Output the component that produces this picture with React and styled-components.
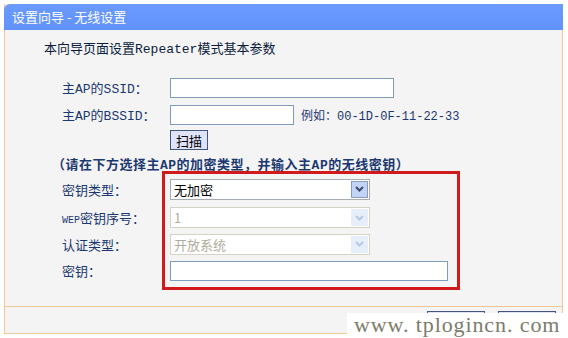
import styled, { createGlobalStyle } from "styled-components";

const GlobalStyle = createGlobalStyle`
  body {
    margin: 0;
    background: #ffffff;
    font-family: "Liberation Mono", "Noto Sans CJK SC", monospace;
    font-size: 13px;
  }
`;

const Panel = styled.div`
  position: relative;
  margin: 4px 0 0 4px;
  width: 557px;
  border: 1px solid #f0c896;
  border-top: none;
  background: #f4f4f4;
`;

const TitleBar = styled.div`
  height: 26px;
  margin: 0 -1px;
  padding-left: 8px;
  background: linear-gradient(#6b9bff, #6192fb);
  border-top-left-radius: 6px;
  color: #ffffff;
  font-family: "Noto Sans CJK SC", sans-serif;
  font-size: 13px;
  line-height: 25px;
`;

const Body = styled.div`
  position: relative;
  padding: 12px 0 22px 57px;
`;

const Intro = styled.div`
  margin-left: -18px;
  height: 16px;
  line-height: 16px;
  color: #0c1c3c;
  margin-bottom: 16px;
`;

const Row = styled.div`
  display: flex;
  align-items: center;
  height: ${(p) => p.$h || 27}px;
`;

const Label = styled.div`
  width: 108px;
  flex: none;
  color: #1b3870;
  white-space: nowrap;
`;

const Small = styled.span`
  font-size: 10px;
`;

const Input = styled.div`
  box-sizing: border-box;
  width: ${(p) => p.$w}px;
  height: ${(p) => p.$h || 20}px;
  background: #ffffff;
  border: 1px solid #7f9db9;
`;

const Example = styled.span`
  margin-left: 7px;
  color: #1b3870;
  font-size: 12px;
`;

const Button = styled.div`
  box-sizing: border-box;
  height: 20px;
  padding: 0 4px;
  display: flex;
  align-items: center;
  justify-content: center;
  width: ${(p) => p.$w || 38}px;
  background: #dfe4fb;
  border: 1px solid #44557f;
  color: #000;
  font-family: "Noto Sans CJK SC", sans-serif;
  font-size: 13px;
`;

const Hint = styled.div`
  margin-left: -10px;
  color: #1b3870;
  font-weight: 600;
  letter-spacing: 0.5px;
  white-space: nowrap;
`;

const SelectBox = styled.div`
  box-sizing: border-box;
  width: 200px;
  height: 21px;
  display: flex;
  align-items: center;
  background: #ffffff;
  border: 1px solid ${(p) => (p.$disabled ? "#d5d2c4" : "#a5acb5")};
  color: ${(p) => (p.$disabled ? "#b0ad9e" : "#000")};
  padding-left: 3px;
`;

const SelectText = styled.span`
  flex: 1;
  font-family: "Noto Sans CJK SC", sans-serif;
  font-size: 13px;
`;

const Arrow = styled.div`
  width: 17px;
  height: 17px;
  margin-right: 1px;
  display: flex;
  align-items: center;
  justify-content: center;
  background: ${(p) => (p.$disabled ? "#e6eefa" : "#c2d3f7")};
  border: ${(p) => (p.$disabled ? "none" : "1px solid #8a9bbd")};
  box-sizing: border-box;
`;

const RedFrame = styled.div`
  position: absolute;
  left: 157px;
  top: 141px;
  width: 298px;
  height: 119px;
  box-sizing: border-box;
  border: 3px solid #d01a1c;
  pointer-events: none;
`;

const Footer = styled.div`
  height: 27px;
  border-top: 1px solid #f0c896;
  display: flex;
  justify-content: flex-end;
  align-items: flex-start;
  gap: 13px;
  padding: 4px 6px 0 0;
  box-sizing: border-box;
`;

const Watermark = styled.div`
  position: absolute;
  left: 347px;
  top: 313px;
  width: 221px;
  height: 25px;
  background: #ffffff;
  color: #7c7c6a;
  font-family: "Liberation Serif", serif;
  font-size: 22px;
  line-height: 24px;
  padding-left: 7px;
  box-sizing: border-box;
  white-space: nowrap;
  letter-spacing: 0.9px;
`;

const Chevron = ({ disabled }) => (
  <svg width="9" height="6" viewBox="0 0 9 6">
    <path
      d="M1 1 L4.5 4.5 L8 1"
      fill="none"
      stroke={disabled ? "#b9c8e2" : "#3c4a6a"}
      strokeWidth="2"
    />
  </svg>
);

const Select = ({ value, disabled }) => (
  <SelectBox $disabled={disabled}>
    <SelectText>{value}</SelectText>
    <Arrow $disabled={disabled}>
      <Chevron disabled={disabled} />
    </Arrow>
  </SelectBox>
);

export default function App() {
  return (
    <>
      <GlobalStyle />
      <Panel>
        <TitleBar>设置向导 - 无线设置</TitleBar>
        <Body>
          <Intro>本向导页面设置Repeater模式基本参数</Intro>
          <Row>
            <Label>主AP的SSID：</Label>
            <Input $w={224} />
          </Row>
          <Row>
            <Label>主AP的BSSID：</Label>
            <Input $w={124} />
            <Example>例如：00-1D-0F-11-22-33</Example>
          </Row>
          <Row $h={24}>
            <Label />
            <Button>扫描</Button>
          </Row>
          <Row $h={22}>
            <Hint>（请在下方选择主AP的加密类型，并输入主AP的无线密钥）</Hint>
          </Row>
          <Row $h={30}>
            <Label>密钥类型：</Label>
            <Select value="无加密" />
          </Row>
          <Row $h={27}>
            <Label>
              <Small>WEP</Small>密钥序号：
            </Label>
            <Select value="1" disabled />
          </Row>
          <Row $h={26}>
            <Label>认证类型：</Label>
            <Select value="开放系统" disabled />
          </Row>
          <Row $h={27}>
            <Label>密钥：</Label>
            <Input $w={278} />
          </Row>
          <RedFrame />
        </Body>
        <Footer>
          <Button $w={58}>上一步</Button>
          <Button $w={58}>下一步</Button>
        </Footer>
      </Panel>
      <Watermark>www. tplogincn. com</Watermark>
    </>
  );
}
